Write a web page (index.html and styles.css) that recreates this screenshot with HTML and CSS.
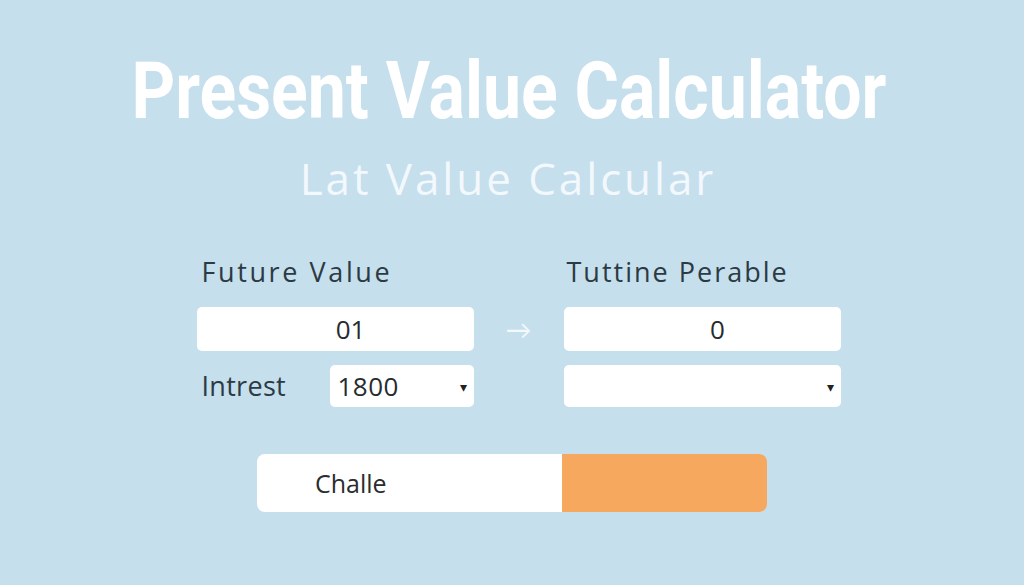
FILE: index.html
```html
<!DOCTYPE html>
<html lang="en">
<head>
<meta charset="utf-8">
<title>Present Value Calculator</title>
<link rel="stylesheet" href="styles.css">
</head>
<body>
<main class="page">
  <h1 class="title"><span class="title-inner">Present Value Calculator</span></h1>
  <h2 class="subtitle">Lat Value Calcular</h2>
  <section class="form">
    <div class="col col-left">
      <div class="label">Future Value</div>
      <div class="field field-input">01</div>
      <div class="row">
        <span class="label label-inline">Intrest</span>
        <div class="field field-select field-small"><span class="sel-value">1800</span><span class="caret">&#9662;</span></div>
      </div>
    </div>
    <div class="arrow-col"><span class="arrow">&rarr;</span></div>
    <div class="col col-right">
      <div class="label">Tuttine Perable</div>
      <div class="field field-input">0</div>
      <div class="field field-select"><span class="sel-value"></span><span class="caret">&#9662;</span></div>
    </div>
  </section>
  <div class="button-bar">
    <div class="btn-left">Challe</div>
    <div class="btn-right"></div>
  </div>
</main>
</body>
</html>
```
FILE: styles.css
```css
html, body {
  margin: 0;
  padding: 0;
  background: #c5dfed;
}
body {
  width: 1024px;
  height: 585px;
  overflow: hidden;
  font-family: "Open Sans", "Lato", sans-serif;
}
.page {
  display: flex;
  flex-direction: column;
  align-items: center;
  padding-top: 52px;
}
.title {
  margin: 0;
  height: 78px;
  font-family: "Roboto", "Liberation Sans", sans-serif;
  font-weight: 700;
  font-size: 79px;
  line-height: 78px;
  color: #ffffff;
  white-space: nowrap;
  margin-left: -6px;
}
.title-inner {
  display: inline-block;
  transform: scaleX(0.86);
  transform-origin: center;
  letter-spacing: 0;
}
.subtitle {
  margin: 23px 0 0 -8px;
  height: 50px;
  font-weight: 400;
  font-size: 44px;
  line-height: 50px;
  color: #f2f8fc;
  letter-spacing: 2.9px;
}
.form {
  margin-top: 52px;
  display: flex;
  align-items: flex-start;
  margin-left: 13px;
}
.col {
  display: flex;
  flex-direction: column;
  width: 277px;
}
.label {
  font-size: 27px;
  line-height: 34px;
  height: 34px;
  color: #2c3a44;
  padding-left: 5px;
  letter-spacing: 2.6px;
}
.col-right .label {
  padding-left: 3px;
  letter-spacing: 2px;
}
.field {
  background: #ffffff;
  border-radius: 5px;
  box-sizing: border-box;
  color: #262b30;
  font-size: 26px;
}
.field-input {
  margin-top: 18px;
  height: 44px;
  line-height: 44px;
  text-align: center;
  padding-left: 31px;
}
.field-select {
  margin-top: 14px;
  height: 42px;
  display: flex;
  align-items: center;
  justify-content: space-between;
  padding: 0 7px 0 8px;
}
.sel-value {
  line-height: 42px;
  letter-spacing: 0.5px;
}
.caret {
  font-size: 14px;
  color: #222;
}
.row {
  display: flex;
  align-items: center;
  margin-top: 14px;
  justify-content: space-between;
}
.label-inline {
  height: 42px;
  line-height: 42px;
  letter-spacing: 0.3px;
}
.row .field-select {
  margin-top: 0;
  width: 144px;
}
.arrow-col {
  width: 90px;
  display: flex;
  justify-content: center;
  padding-top: 52px;
  height: 44px;
  align-items: center;
}
.arrow {
  font-size: 26px;
  color: #f3f8fb;
  line-height: 44px;
}
.button-bar {
  margin-top: 47px;
  display: flex;
  width: 510px;
  height: 58px;
  border-radius: 8px;
  overflow: hidden;
}
.btn-left {
  width: 305px;
  background: #ffffff;
  font-size: 25px;
  line-height: 58px;
  color: #2a2c2e;
  padding-left: 58px;
  box-sizing: border-box;
}
.btn-right {
  flex: 1;
  background: #f6a85e;
}
```
